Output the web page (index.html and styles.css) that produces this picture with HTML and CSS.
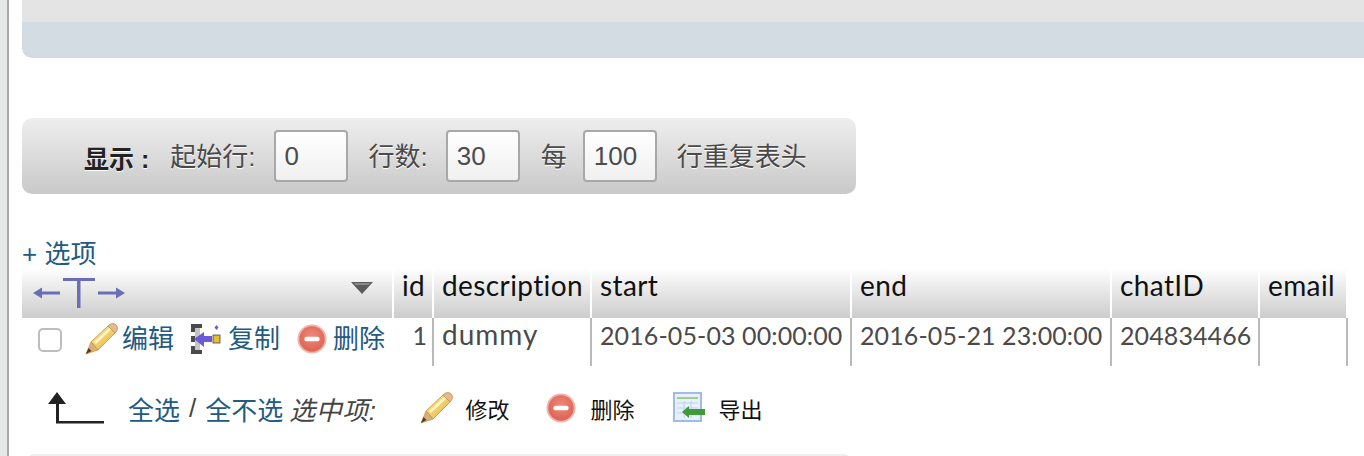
FILE: index.html
```html
<!DOCTYPE html>
<html lang="zh">
<head>
<meta charset="utf-8">
<title>phpMyAdmin</title>
<link rel="stylesheet" href="styles.css">
</head>
<body>
<svg class="defs" width="0" height="0" aria-hidden="true">
  <defs>
    <linearGradient id="penBody" x1="0" y1="0" x2="1" y2="1"><stop offset="0" stop-color="#fdf0a0"/><stop offset="1" stop-color="#e6ae3e"/></linearGradient>
    <radialGradient id="redBall" cx="0.5" cy="0.4" r="0.65"><stop offset="0" stop-color="#ee8a7c"/><stop offset="1" stop-color="#dc5f50"/></radialGradient>
    <symbol id="pencil" viewBox="0 0 32 32">
      <path d="M6 19 23 3l7 7-17 17z" fill="url(#penBody)" stroke="#d0a04a" stroke-width="1"/>
      <path d="M10 20 25.500 5.500" stroke="#fff6c4" stroke-width="2.500" fill="none"/>
      <path d="M23 3c3-3 6-3 8-1s2 5-1 8z" fill="#e8b98c" stroke="#c9975a"/>
      <path d="M6 19l7 8-12 4z" fill="#dcae74" stroke="#b98a4e" stroke-width=".6"/>
      <path d="M3.500 25l3 3-5.500 3z" fill="#5b3a1c"/>
    </symbol>
    <symbol id="minus" viewBox="0 0 32 32">
      <circle cx="16" cy="16" r="15.500" fill="#f0b4aa"/>
      <circle cx="16" cy="16" r="13.500" fill="url(#redBall)"/>
      <rect x="8" y="13.500" width="16" height="5" rx="2" fill="#fff"/>
    </symbol>
  </defs>
</svg>
<div class="edge"></div>
<main class="page">
  <div class="top-bar">
    <div class="top-gray"></div>
    <div class="top-blue"></div>
  </div>

  <form class="nav-form">
    <b class="show">显示 :</b>
    <span class="lbl">起始行:</span>
    <input class="num" value="0">
    <span class="lbl">行数:</span>
    <input class="num" value="30">
    <span class="lbl">每</span>
    <input class="num num-last" value="100">
    <span class="lbl">行重复表头</span>
  </form>

  <a class="options">+ 选项</a>

  <table class="data">
    <colgroup>
      <col class="c0"><col class="c1"><col class="c2"><col class="c3"><col class="c4"><col class="c5"><col class="c6">
    </colgroup>
    <thead>
      <tr>
        <th class="lead">
          <div class="lead-inner">
            <svg class="t-arrows" width="94" height="36" viewBox="0 0 94 36" fill="#6a6eb8">
              <path d="M1 19l9-5.500v4h18v3H10v4z"/>
              <path d="M31 4h32v3H48.500v27h-3.500V7H31z"/>
              <path d="M93 19l-9-5.500v4H66v3h18v4z"/>
            </svg>
            <svg class="sort" width="24" height="14" viewBox="0 0 24 14"><path d="M1 1h22L12 13z" fill="#5c5c5c"/><path d="M4 2h16l-1.500 2h-13z" fill="#8a8a8a"/></svg>
          </div>
        </th>
        <th>id</th>
        <th>description</th>
        <th>start</th>
        <th>end</th>
        <th>chatID</th>
        <th>email</th>
      </tr>
    </thead>
    <tbody>
      <tr>
        <td class="actions">
          <div class="act-row">
            <span class="check"></span>
            <a class="act act-edit"><svg width="34" height="32"><use href="#pencil"/></svg>编辑</a>
            <a class="act act-copy">
              <svg class="copy-icon" width="30" height="32" viewBox="0 0 30 32">
                <path d="M0 1h11v4H4v4H0zM0 13h4v6H0zM0 23h4v4h7v4H0z" fill="#4a4a4a"/>
                <path d="M4 5h5v22H4z" fill="#c4c4c4"/>
                <path d="M3 16l10-7v4h8v6h-8v5z" fill="#6a5cd6"/>
                <rect x="22" y="12" width="7" height="8" fill="#e8bd2e" stroke="#444" stroke-width=".8"/>
                <path d="M25.500 2l2 2.500-2 2.500-2-2.500z" fill="#6a5cd6"/>
              </svg>复制</a>
            <a class="act act-del"><svg width="30" height="30"><use href="#minus"/></svg>删除</a>
          </div>
        </td>
        <td class="right">1</td>
        <td class="word">dummy</td>
        <td>2016-05-03 00:00:00</td>
        <td>2016-05-21 23:00:00</td>
        <td>204834466</td>
        <td></td>
      </tr>
    </tbody>
  </table>

  <div class="bulk">
    <svg class="up-arrow" width="58" height="32" viewBox="0 0 58 32"><path d="M1 12 10 0l9 12h-7v17h45v2.500H9V12z" fill="#222"/></svg>
    <a class="link">全选</a><span class="sep">/</span><a class="link">全不选</a>
    <i class="sel">选中项:</i>
    <span class="tool tool-edit"><svg width="34" height="32"><use href="#pencil"/></svg>修改</span>
    <span class="tool tool-del"><svg width="30" height="30"><use href="#minus"/></svg>删除</span>
    <span class="tool tool-exp">
      <svg width="34" height="32" viewBox="0 0 34 32">
        <rect x="1" y="1" width="27" height="28" fill="#e8f0fb" stroke="#9dbde6" stroke-width="2"/>
        <path d="M4 6h21" stroke="#9ccf88" stroke-width="2"/>
        <path d="M4 11h21M4 16h21M4 21h21M11 9v17M18 9v17" stroke="#bcd0ea"/>
        <path d="M9 20l7-6v3h16v6H16v3z" fill="#3f9a3a"/>
      </svg>导出</span>
  </div>
  <div class="next-box"></div>
</main>
</body>
</html>
```
FILE: styles.css
```css
* { box-sizing: border-box; }
html, body { margin: 0; height: 456px; overflow: hidden; background: #fff; }
body {
  display: flex;
  font-family: "Liberation Sans", "Noto Sans CJK SC", sans-serif;
  color: #444;
}
.defs { display: block; width: 0; height: 0; }
.edge { width: 9px; flex: none; background: #e6e8e8; border-right: 2px solid #a9a9a9; }
.page { flex: 1; padding-left: 13px; min-width: 0; }

.top-gray { height: 22px; background: #e4e4e4; }
.top-blue { height: 36px; background: #d3dbe3; border-radius: 0 0 0 10px; }

.nav-form {
  display: flex;
  align-items: center;
  width: 834px;
  height: 76px;
  margin-top: 60px;
  padding-left: 62px;
  border-radius: 10px;
  background: linear-gradient(#eeeeee, #c9c9c9);
  font-size: 26px;
  text-shadow: 0 1px 0 #fff;
}
.show { color: #222; font-size: 25px; margin-right: 21px; margin-top: 2px; white-space: nowrap; }
.lbl { white-space: nowrap; color: #4a4a4a; margin-top: -3px; }
.num {
  width: 74px;
  height: 52px;
  margin: 0 21px 0 18px;
  padding: 0 0 0 9px;
  border: 2px solid #a8a8a8;
  border-radius: 4px;
  background: linear-gradient(#fff, #f0f0f0);
  font: 26px "Liberation Sans", sans-serif;
  color: #4c4c4c;
}
.num-last { margin: 0 20px 0 16px; }

.options {
  display: block;
  height: 28px;
  margin-top: 46px;
  font-size: 26px;
  line-height: 28px;
  color: #235a81;
}

.data { table-layout: fixed; width: 1326px; border-collapse: separate; border-spacing: 0; font-family: Lato, "Noto Sans CJK SC", sans-serif; }
.c0 { width: 372px; }
.c1 { width: 40px; }
.c2 { width: 158px; }
.c3 { width: 260px; }
.c4 { width: 260px; }
.c5 { width: 148px; }
.c6 { width: 88px; }
th {
  height: 50px;
  padding: 0 0 17px 8px;
  border-right: 2px solid #fff;
  background: linear-gradient(#ffffff, #cccccc);
  font-size: 28px;
  line-height: 30px;
  font-weight: 400;
  letter-spacing: .4px;
  text-align: left;
  color: #111;
  white-space: nowrap;
}
th.lead { padding: 0; }
.lead-inner { display: flex; align-items: flex-start; justify-content: space-between; padding: 6px 18px 0 10px; height: 50px; }
.t-arrows { flex: none; }
.sort { flex: none; margin-top: 7px; }
td {
  height: 48px;
  padding: 0 0 14px 8px;
  border-right: 2px solid #b9b9b9;
  font-size: 25px;
  line-height: 30px;
  letter-spacing: .1px;
  color: #4a4a4a;
  white-space: nowrap;
}
td.right { text-align: right; padding-right: 5px; }
td.word { font-size: 28px; letter-spacing: 1px; padding-bottom: 17px; }
td.actions { border-right: none; padding: 0 0 0 16px; vertical-align: top; }
.act-row { display: flex; align-items: center; height: 42px; }
.check {
  width: 24px;
  height: 24px;
  margin: 2px 22px 0 0;
  border: 2px solid #bdbdbd;
  border-radius: 5px;
  background: #fff;
  flex: none;
}
.act { display: flex; align-items: center; font-size: 26px; letter-spacing: 0; color: #235a81; white-space: nowrap; font-family: "Liberation Sans", "Noto Sans CJK SC", sans-serif; }
.act-edit { margin-right: 17px; }
.act-edit svg { margin-right: 4px; }
.act-copy { margin-right: 17px; }
.act svg { flex: none; }
.copy-icon { margin-right: 7px; }
.act-del svg { margin-right: 6px; }

.bulk { display: flex; align-items: center; height: 88px; padding: 0 0 4px 25px; font-size: 26px; }
.up-arrow { flex: none; margin-right: 23px; }
.link { color: #235a81; }
.sep { margin: 0 9px; color: #444; }
.sel { margin-left: 6px; margin-right: 42px; letter-spacing: .5px; color: #444; }
.tool { display: flex; align-items: center; font-size: 22px; color: #111; }
.tool-edit { margin-right: 36px; }
.tool-edit svg { margin-right: 13px; }
.tool-del { margin-right: 38px; }
.tool-del svg { margin-right: 15px; }
.tool-exp svg { margin-right: 12px; }
.next-box { width: 822px; height: 6px; margin-left: 6px; background: #eee; border-radius: 6px 6px 0 0; }
```
